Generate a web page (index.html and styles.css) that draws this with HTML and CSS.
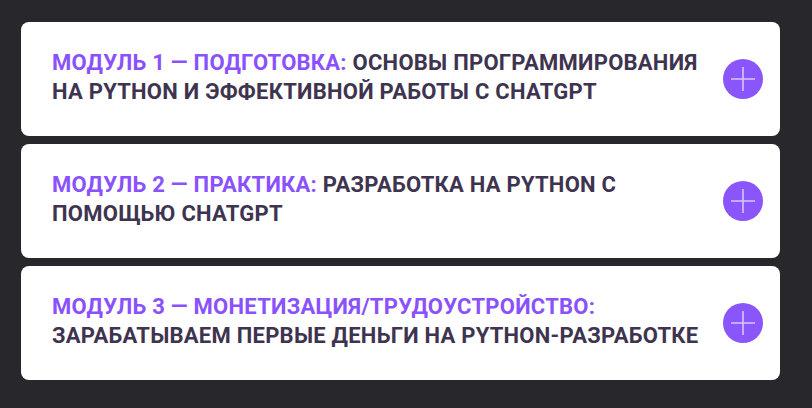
FILE: index.html
```html
<!DOCTYPE html>
<html lang="ru">
<head>
<meta charset="utf-8">
<link rel="stylesheet" href="styles.css">
</head>
<body>
<div class="list">
  <div class="card">
    <div class="title"><span class="accent">МОДУЛЬ 1 — ПОДГОТОВКА:</span> ОСНОВЫ ПРОГРАММИРОВАНИЯ НА PYTHON И ЭФФЕКТИВНОЙ РАБОТЫ С CHATGPT</div>
    <div class="toggle"><svg viewBox="0 0 40 40" width="40" height="40"><path d="M8 20H32M20 8V32" stroke="#d9c6f7" stroke-width="1.6" fill="none"/></svg></div>
  </div>
  <div class="card">
    <div class="title"><span class="accent">МОДУЛЬ 2 — ПРАКТИКА:</span> РАЗРАБОТКА НА PYTHON С ПОМОЩЬЮ CHATGPT</div>
    <div class="toggle"><svg viewBox="0 0 40 40" width="40" height="40"><path d="M8 20H32M20 8V32" stroke="#d9c6f7" stroke-width="1.6" fill="none"/></svg></div>
  </div>
  <div class="card">
    <div class="title"><span class="accent">МОДУЛЬ 3 — МОНЕТИЗАЦИЯ/ТРУДОУСТРОЙСТВО:</span> ЗАРАБАТЫВАЕМ ПЕРВЫЕ ДЕНЬГИ НА PYTHON-РАЗРАБОТКЕ</div>
    <div class="toggle"><svg viewBox="0 0 40 40" width="40" height="40"><path d="M8 20H32M20 8V32" stroke="#d9c6f7" stroke-width="1.6" fill="none"/></svg></div>
  </div>
</div>
</body>
</html>
```
FILE: styles.css
```css
html, body {
  margin: 0;
  padding: 0;
  background: #28272c;
}
body {
  padding: 22px 32px 28px 21px;
  font-family: "Roboto", "Liberation Sans", sans-serif;
}
.list {
  display: flex;
  flex-direction: column;
  gap: 8px;
}
.card {
  height: 114px;
  box-sizing: border-box;
  background: #ffffff;
  border-radius: 8px;
  padding: 0 17px 0 31px;
  display: flex;
  align-items: center;
  gap: 18px;
}
.title {
  flex: 1;
  font-size: 22px;
  font-weight: 700;
  line-height: 28.5px;
  letter-spacing: 0.25px;
  color: #3e3450;
  text-transform: uppercase;
  padding-bottom: 3px;
}
.accent {
  color: #8a52fd;
}
.toggle {
  width: 40px;
  height: 40px;
  border-radius: 50%;
  background: #8b55fc;
  flex: none;
}
.toggle svg {
  display: block;
}
```
